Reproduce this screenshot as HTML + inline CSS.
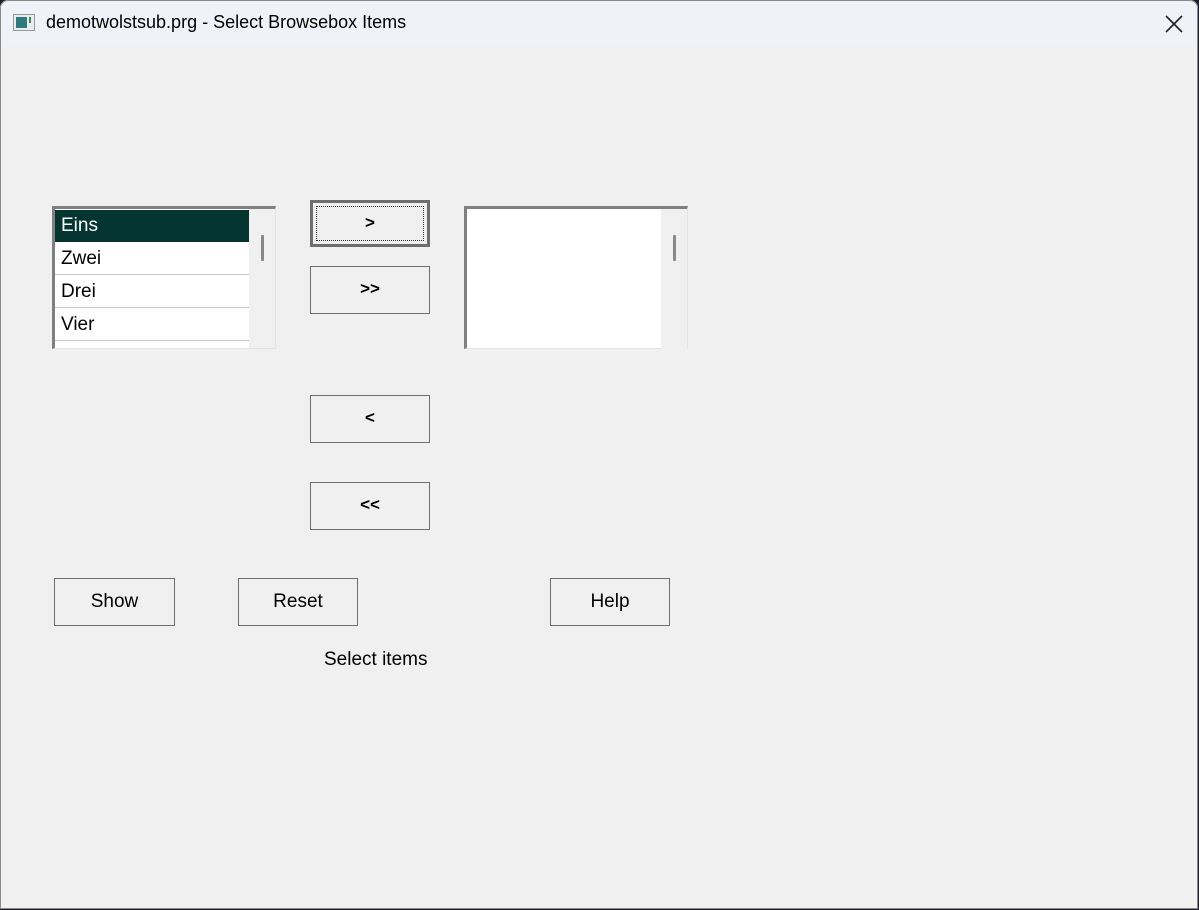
<!DOCTYPE html>
<html><head><style>
body{margin:0;width:1199px;height:910px;background:#1e1e2e;overflow:hidden;font-family:"Liberation Sans",sans-serif;}
.win{position:absolute;left:0;top:0;width:1198px;height:909px;background:#f0f0f0;border-radius:8px 8px 0 0;overflow:hidden;}
.frame{position:absolute;left:0;top:0;width:1198px;height:909px;border:1px solid #888;box-sizing:border-box;border-radius:8px 8px 0 0;pointer-events:none}
.tb{position:absolute;left:0;top:0;width:100%;height:47px;background:#eff3f9;}
.title{position:absolute;left:46px;top:12px;font-size:18px;color:#000;font-family:"Liberation Sans",sans-serif;}
.ab{position:absolute;box-sizing:border-box}
.lb{background:#fff;border-top:3px solid #808080;border-left:3px solid #808080;border-right:1px solid #e4e4e4;border-bottom:1px solid #e4e4e4}
.row{position:absolute;left:0;width:194px;height:32px;border-bottom:1px solid #c8c8c8;font-size:19px;line-height:31px;padding-left:6px;box-sizing:border-box;color:#000}
.btn{position:absolute;box-sizing:border-box;border:1px solid #6e6e6e;background:#f0f0f0;text-align:center;font-size:19px;color:#000;}
.ch{font-weight:bold;font-size:17px;}
.sb{position:absolute;background:#f0f0f0}
.th{position:absolute;width:3px;height:26px;background:#888;border-radius:1px}
</style></head><body>
<div class="win">
<div class="tb"></div>
<svg class="ab" style="left:13px;top:14px" width="22" height="18"><rect x="0.5" y="0.5" width="21" height="16" fill="#e8ecf0" stroke="#999"/><rect x="3" y="3" width="11" height="11" fill="#2f7a80"/><rect x="16" y="3" width="2" height="6" fill="#3a8a50"/></svg>
<div class="title">demotwolstsub.prg - Select Browsebox Items</div>
<svg class="ab" style="left:1165px;top:15px" width="18" height="18"><path d="M1 1L17 17M17 1L1 17" stroke="#222" stroke-width="1.6"/></svg>

<div class="ab lb" style="left:52px;top:206px;width:224px;height:143px;overflow:hidden">
<div class="row" style="top:1px;background:#053530;color:#fff;border-bottom:none">Eins</div>
<div class="row" style="top:34px">Zwei</div>
<div class="row" style="top:67px">Drei</div>
<div class="row" style="top:100px">Vier</div>
<div class="sb" style="left:194px;top:0;width:26px;height:140px"></div>
<div class="th" style="left:206px;top:26px"></div>
</div>

<div class="ab lb" style="left:464px;top:206px;width:224px;height:143px">
<div class="sb" style="left:194px;top:0;width:26px;height:140px"></div>
<div class="th" style="left:206px;top:26px"></div>
</div>

<div class="btn ch" style="left:310px;top:200px;width:120px;height:47px;border:3px solid #6e6e6e;line-height:39px">
<div style="position:absolute;left:3px;top:3px;right:3px;bottom:3px;border:1px dotted #333"></div>&gt;</div>
<div class="btn ch" style="left:310px;top:266px;width:120px;height:48px;line-height:44px">&gt;&gt;</div>
<div class="btn ch" style="left:310px;top:395px;width:120px;height:48px;line-height:44px">&lt;</div>
<div class="btn ch" style="left:310px;top:482px;width:120px;height:48px;line-height:44px">&lt;&lt;</div>
<div class="btn" style="left:54px;top:578px;width:121px;height:48px;line-height:45px">Show</div>
<div class="btn" style="left:238px;top:578px;width:120px;height:48px;line-height:45px">Reset</div>
<div class="btn" style="left:550px;top:578px;width:120px;height:48px;line-height:45px">Help</div>
<div class="ab" style="left:324px;top:649px;font-size:19px;color:#000">Select items</div>
<div class="frame"></div>
</div>
</body></html>
